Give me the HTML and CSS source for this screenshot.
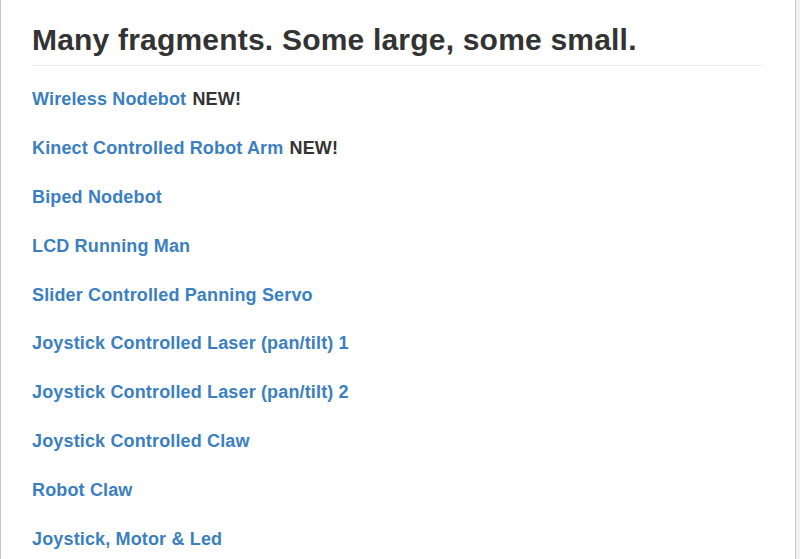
FILE: index.html
```html
<!DOCTYPE html>
<html lang="en">
<head>
<meta charset="utf-8">
<title>Fragments</title>
<link rel="stylesheet" href="styles.css">
</head>
<body>
<div class="page">
  <div class="page-header">
    <h1 class="title">Many fragments. Some large, some small.</h1>
  </div>
  <ul class="list">
    <li class="item"><a class="link" href="#">Wireless Nodebot</a> <span class="new">NEW!</span></li>
    <li class="item"><a class="link" href="#">Kinect Controlled Robot Arm</a> <span class="new">NEW!</span></li>
    <li class="item"><a class="link" href="#">Biped Nodebot</a></li>
    <li class="item"><a class="link" href="#">LCD Running Man</a></li>
    <li class="item"><a class="link" href="#">Slider Controlled Panning Servo</a></li>
    <li class="item"><a class="link" href="#">Joystick Controlled Laser (pan/tilt) 1</a></li>
    <li class="item"><a class="link" href="#">Joystick Controlled Laser (pan/tilt) 2</a></li>
    <li class="item"><a class="link" href="#">Joystick Controlled Claw</a></li>
    <li class="item"><a class="link" href="#">Robot Claw</a></li>
    <li class="item"><a class="link" href="#">Joystick, Motor &amp; Led</a></li>
  </ul>
</div>
</body>
</html>
```

FILE: styles.css
```css
html, body {
  margin: 0;
  padding: 0;
  height: 100%;
  overflow: hidden;
}
body {
  background: #f1f1f1;
  font-family: "Liberation Sans", Arial, sans-serif;
  color: #333;
}
.page {
  box-sizing: border-box;
  width: 796px;
  height: 100%;
  background: #fff;
  border-left: 1px solid #c8c8c8;
  border-right: 1px solid #c8c8c8;
  padding: 23px 31px 0 31px;
}
.page-header {
  border-bottom: 1px solid #eee;
  padding-bottom: 9px;
  margin-bottom: 23px;
}
.title {
  margin: 0;
  font-size: 30px;
  line-height: 33px;
  font-weight: bold;
  letter-spacing: 0.2px;
  color: #333;
}
.list {
  list-style: none;
  margin: 0;
  padding: 0;
  display: flex;
  flex-direction: column;
  gap: 28.9px;
}
.item {
  font-size: 18px;
  line-height: 20px;
  height: 20px;
  font-weight: bold;
  letter-spacing: 0.15px;
  white-space: nowrap;
}
.link {
  color: #3b7fc1;
  text-decoration: none;
}
.new {
  color: #333;
  margin-left: 1px;
}
```
